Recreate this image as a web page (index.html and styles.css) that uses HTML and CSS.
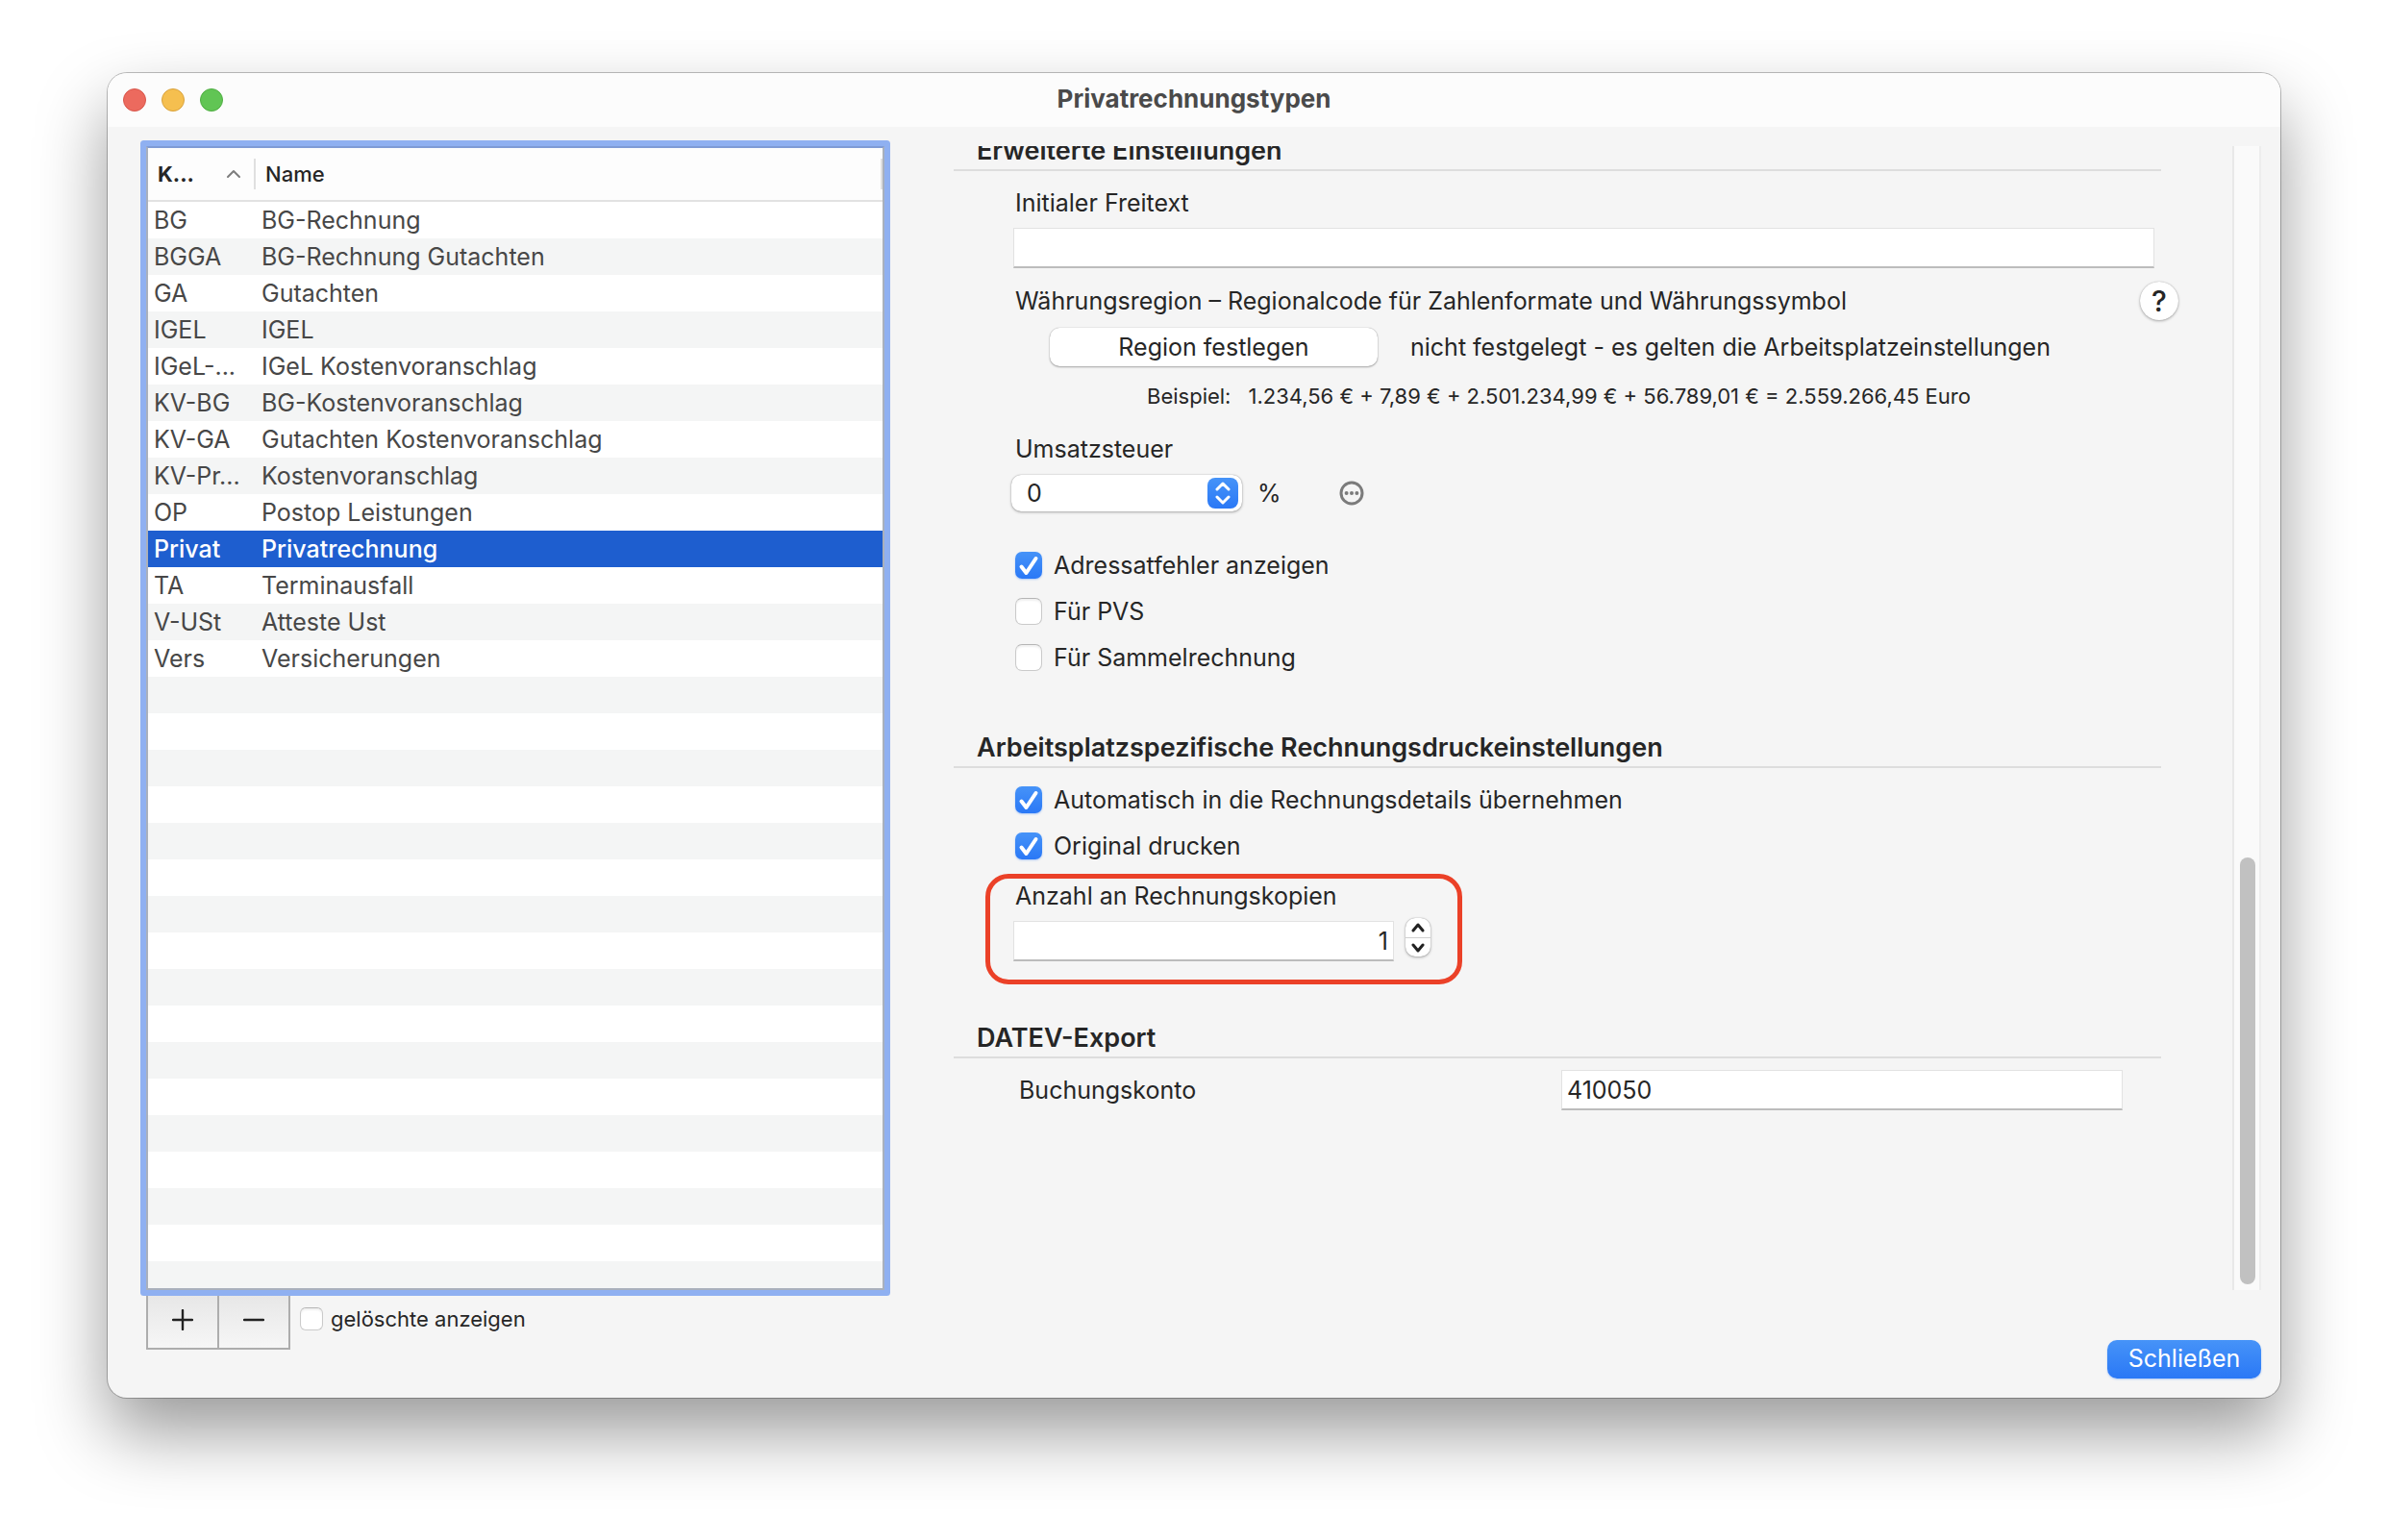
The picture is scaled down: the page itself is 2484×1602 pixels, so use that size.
FILE: index.html
```html
<!DOCTYPE html>
<html lang="de">
<head>
    <meta charset="UTF-8">
    <meta name="viewport" content="width=device-width, initial-scale=1.0">
    <title>Privatrechnungstypen</title>
    <link rel="stylesheet" href="styles.css">
</head>
<body>
    <div class="window">
        <header class="titlebar">
            <div class="lights">
                <span class="light red"></span>
                <span class="light yellow"></span>
                <span class="light green"></span>
            </div>
            <h1>Privatrechnungstypen</h1>
        </header>

        <main class="content">
            <!-- Liste der Rechnungstypen -->
            <div class="list">
                <table>
                    <thead>
                        <tr>
                            <th class="col-code sorted">
                                <div class="th-inner">
                                    <span>K...</span>
                                    <svg width="16" height="10" viewBox="0 0 16 10"><path d="M2 8l6-6 6 6" fill="none" stroke="#7d7d7d" stroke-width="2" stroke-linecap="round" stroke-linejoin="round"/></svg>
                                </div>
                            </th>
                            <th><div class="th-inner last">Name</div></th>
                        </tr>
                    </thead>
                    <tbody>
                        <tr><td>BG</td><td>BG-Rechnung</td></tr>
                        <tr><td>BGGA</td><td>BG-Rechnung Gutachten</td></tr>
                        <tr><td>GA</td><td>Gutachten</td></tr>
                        <tr><td>IGEL</td><td>IGEL</td></tr>
                        <tr><td>IGeL-...</td><td>IGeL Kostenvoranschlag</td></tr>
                        <tr><td>KV-BG</td><td>BG-Kostenvoranschlag</td></tr>
                        <tr><td>KV-GA</td><td>Gutachten Kostenvoranschlag</td></tr>
                        <tr><td>KV-Pr...</td><td>Kostenvoranschlag</td></tr>
                        <tr><td>OP</td><td>Postop Leistungen</td></tr>
                        <tr class="selected"><td>Privat</td><td>Privatrechnung</td></tr>
                        <tr><td>TA</td><td>Terminausfall</td></tr>
                        <tr><td>V-USt</td><td>Atteste Ust</td></tr>
                        <tr><td>Vers</td><td>Versicherungen</td></tr>
                    </tbody>
                </table>
                <div class="empty-rows"></div>
            </div>

            <!-- Einstellungen -->
            <div class="panel">
                <form class="form">
                    <section>
                        <h2>Erweiterte Einstellungen</h2>
                        <div class="section-body">
                            <label class="label" for="freitext">Initialer Freitext</label>
                            <input class="field" type="text" id="freitext">

                            <div class="region-head">
                                <span class="label">Währungsregion – Regionalcode für Zahlenformate und Währungssymbol</span>
                                <button type="button" class="help" aria-label="Hilfe">?</button>
                            </div>
                            <div class="region">
                                <button type="button" class="push">Region festlegen</button>
                                <span>nicht festgelegt - es gelten die Arbeitsplatzeinstellungen</span>
                            </div>
                            <p class="example"><span>Beispiel:</span><span>1.234,56 € + 7,89 € + 2.501.234,99 € + 56.789,01 € = 2.559.266,45 Euro</span></p>

                            <label class="label tax-label" for="steuer">Umsatzsteuer</label>
                            <div class="tax">
                                <div class="popup">
                                    <select id="steuer">
                                        <option>0</option>
                                        <option>7</option>
                                        <option>19</option>
                                    </select>
                                    <svg class="popup-arrows" width="32" height="32" viewBox="0 0 32 32">
                                        <path d="M10 12l6-6 6 6M10 20l6 6 6-6" fill="none" stroke="#fff" stroke-width="3" stroke-linecap="round" stroke-linejoin="round"/>
                                    </svg>
                                </div>
                                <span>%</span>
                                <button type="button" class="more" aria-label="Mehr">
                                    <svg width="26" height="26" viewBox="0 0 26 26">
                                        <circle cx="13" cy="13" r="11" fill="none" stroke="#7b7b7b" stroke-width="3"/>
                                        <circle cx="7.6" cy="13" r="2" fill="#7b7b7b"/>
                                        <circle cx="13" cy="13" r="2" fill="#7b7b7b"/>
                                        <circle cx="18.4" cy="13" r="2" fill="#7b7b7b"/>
                                    </svg>
                                </button>
                            </div>

                            <div class="checks checks-main">
                                <label class="check">
                                    <input type="checkbox" checked>
                                    <svg class="tick" width="28" height="28" viewBox="0 0 28 28"><path d="M6.500 15.500l5 6.500L21.500 7" fill="none" stroke="#fff" stroke-width="4" stroke-linecap="round" stroke-linejoin="round"/></svg>
                                    <span>Adressatfehler anzeigen</span>
                                </label>
                                <label class="check">
                                    <input type="checkbox">
                                    <span>Für PVS</span>
                                </label>
                                <label class="check">
                                    <input type="checkbox">
                                    <span>Für Sammelrechnung</span>
                                </label>
                            </div>
                        </div>
                    </section>

                    <section>
                        <h2>Arbeitsplatzspezifische Rechnungsdruckeinstellungen</h2>
                        <div class="section-body">
                            <div class="checks">
                                <label class="check">
                                    <input type="checkbox" checked>
                                    <svg class="tick" width="28" height="28" viewBox="0 0 28 28"><path d="M6.500 15.500l5 6.500L21.500 7" fill="none" stroke="#fff" stroke-width="4" stroke-linecap="round" stroke-linejoin="round"/></svg>
                                    <span>Automatisch in die Rechnungsdetails übernehmen</span>
                                </label>
                                <label class="check">
                                    <input type="checkbox" checked>
                                    <svg class="tick" width="28" height="28" viewBox="0 0 28 28"><path d="M6.500 15.500l5 6.500L21.500 7" fill="none" stroke="#fff" stroke-width="4" stroke-linecap="round" stroke-linejoin="round"/></svg>
                                    <span>Original drucken</span>
                                </label>
                            </div>
                            <div class="highlight">
                                <label class="label" for="kopien">Anzahl an Rechnungskopien</label>
                                <div class="copies">
                                    <input class="field" type="number" id="kopien" value="1">
                                    <div class="stepper">
                                        <button type="button" aria-label="Mehr Kopien"><svg width="16" height="10" viewBox="0 0 16 10"><path d="M3 8l5-6 5 6" fill="none" stroke="#222" stroke-width="3" stroke-linecap="round" stroke-linejoin="round"/></svg></button>
                                        <button type="button" aria-label="Weniger Kopien"><svg width="16" height="10" viewBox="0 0 16 10"><path d="M3 2l5 6 5-6" fill="none" stroke="#222" stroke-width="3" stroke-linecap="round" stroke-linejoin="round"/></svg></button>
                                    </div>
                                </div>
                            </div>
                        </div>
                    </section>

                    <section class="datev">
                        <h2>DATEV-Export</h2>
                        <div class="section-body account">
                            <label for="konto">Buchungskonto</label>
                            <input class="field" type="text" id="konto" value="410050">
                        </div>
                    </section>
                </form>
                <div class="scrollbar"><div class="thumb"></div></div>
            </div>
        </main>

        <footer class="footer">
            <div class="list-actions">
                <button type="button" class="square" aria-label="Hinzufügen"><svg width="22" height="22" viewBox="0 0 22 22"><path d="M11 1v20M1 11h20" stroke="#222" stroke-width="2.400" stroke-linecap="round"/></svg></button>
                <button type="button" class="square" aria-label="Entfernen"><svg width="22" height="22" viewBox="0 0 22 22"><path d="M1 11h20" stroke="#222" stroke-width="2.400" stroke-linecap="round"/></svg></button>
                <label class="check small">
                    <input type="checkbox">
                    <span>gelöschte anzeigen</span>
                </label>
            </div>
            <button type="button" class="close">Schließen</button>
        </footer>
    </div>
</body>
</html>
```
FILE: styles.css
```css
* {
    box-sizing: border-box;
}
body {
    margin: 0;
    padding: 76px 112px 148px;
    min-height: 100vh;
    display: flex;
    background: #fff;
    font-family: Inter, "Liberation Sans", sans-serif;
    font-size: 25px;
    line-height: 32px;
    color: #262626;
}
button, input, select {
    font: inherit;
    color: inherit;
    margin: 0;
}
svg {
    display: block;
}
.window {
    flex: 1;
    display: flex;
    flex-direction: column;
    background: #f5f5f5;
    border-radius: 20px;
    box-shadow: 0 0 0 1px rgba(0,0,0,0.25), 0 36px 72px rgba(0,0,0,0.4);
}
.titlebar {
    position: relative;
    height: 56px;
    display: flex;
    align-items: center;
    justify-content: center;
    padding-bottom: 2px;
    background: #fcfcfc;
    border-radius: 20px 20px 0 0;
}
.titlebar h1 {
    margin: 0;
    font-size: 26px;
    font-weight: 700;
    color: #4a4a4a;
}
.lights {
    position: absolute;
    left: 16px;
    top: 16px;
    display: flex;
    gap: 16px;
}
.light {
    width: 24px;
    height: 24px;
    border-radius: 50%;
}
.red {
    background: #ec6a5e;
    border: 1px solid #d8564b;
}
.yellow {
    background: #f5bf4f;
    border: 1px solid #d9a23c;
}
.green {
    background: #61c554;
    border: 1px solid #4fae42;
}
.content {
    flex: 1;
    display: grid;
    grid-template-columns: 768fr 1360fr;
    gap: 72px;
    padding: 20px 20px 0 40px;
}

/* Liste */
.list {
    position: relative;
    display: flex;
    flex-direction: column;
    background: #fff;
    border: 2px solid #a9b0bc;
    border-top-color: #7f9bd6;
    box-shadow: 0 0 0 6px #8fb0f1;
    border-radius: 1px;
}
table {
    width: 100%;
    border-collapse: separate;
    border-spacing: 0;
    table-layout: fixed;
    color: #474747;
}
th {
    padding: 0;
    height: 56px;
    border-bottom: 2px solid #e2e2e2;
    font-size: 22px;
    font-weight: 500;
    text-align: left;
    color: #262626;
    background: #fdfdfd;
}
.col-code {
    width: 112px;
    font-weight: 700;
}
.th-inner {
    display: flex;
    align-items: center;
    justify-content: space-between;
    padding: 0 13px 0 10px;
    border-right: 2px solid #e0e0e0;
}
td {
    height: 38px;
    padding: 0 0 0 6px;
    white-space: nowrap;
}
tbody tr:nth-child(even) {
    background: #f4f5f5;
}
tbody tr.selected {
    background: #1e5ecf;
    color: #fff;
    font-weight: 500;
}
.empty-rows {
    flex: 1;
    background: repeating-linear-gradient(#f4f5f5 0 38px, #fff 38px 76px);
}

/* Einstellungen */
.panel {
    display: flex;
    overflow: hidden;
}
.form {
    flex: 1;
    padding-right: 74px;
}
h2 {
    margin: 62px 0 0;
    padding: 0 0 3px 24px;
    border-bottom: 2px solid #dddddd;
    font-size: 27px;
    line-height: 32px;
    font-weight: 600;
}
section:first-child h2 {
    margin-top: -11px;
}
.datev h2 {
    margin-top: 40px;
}
.section-body {
    padding: 17px 7px 0 62px;
}
.label {
    display: block;
    padding-left: 2px;
}
.field {
    display: block;
    width: 100%;
    height: 42px;
    margin-top: 10px;
    padding: 0 5px;
    background: #fff;
    border: 1px solid #e2e2e2;
    border-bottom: 2px solid #bcbcbc;
    border-radius: 0;
    outline: none;
}
.region-head {
    display: flex;
    justify-content: space-between;
    align-items: center;
    height: 32px;
    margin: 18px -25px 0 0;
}
.help {
    width: 40px;
    height: 40px;
    padding: 0;
    border: none;
    border-radius: 50%;
    background: #fff;
    box-shadow: 0 0 1px rgba(0,0,0,0.3), 0 1px 3px rgba(0,0,0,0.3);
    font-size: 30px;
    font-weight: 500;
}
.region {
    display: flex;
    align-items: center;
    gap: 34px;
    margin: 12px 0 0 38px;
}
.push {
    width: 341px;
    height: 40px;
    padding: 0;
    border: none;
    border-radius: 10px;
    background: #fff;
    box-shadow: 0 0 1px rgba(0,0,0,0.4), 0 1px 2px rgba(0,0,0,0.3);
}
.example {
    display: flex;
    gap: 18px;
    margin: 17px 0 0 139px;
    font-size: 22px;
    line-height: 28px;
}
.tax-label {
    margin-top: 25px;
}
.tax {
    display: flex;
    align-items: center;
    height: 38px;
    margin-top: 11px;
}
.popup {
    position: relative;
    width: 240px;
    margin: 0 16px 0 -2px;
}
.popup select {
    appearance: none;
    display: block;
    width: 100%;
    height: 38px;
    padding: 0 40px 0 16px;
    border: none;
    border-radius: 10px;
    background: #fff;
    box-shadow: 0 0 1px rgba(0,0,0,0.4), 0 1px 3px rgba(0,0,0,0.3);
}
.popup-arrows {
    position: absolute;
    right: 4px;
    top: 3px;
    border-radius: 8px;
    background: linear-gradient(#4693f8, #2a78f6);
    pointer-events: none;
}
.more {
    margin-left: 60px;
    padding: 0;
    border: none;
    background: none;
}
.checks {
    display: flex;
    flex-direction: column;
    align-items: flex-start;
    gap: 16px;
}
.checks-main {
    margin-top: 40px;
}
.check {
    position: relative;
    display: flex;
    align-items: center;
    gap: 12px;
    padding-left: 2px;
}
.check input {
    appearance: none;
    width: 28px;
    height: 28px;
    border: 1px solid #cacaca;
    border-top-color: #b5b5b5;
    border-radius: 7px;
    background: #fff;
    box-shadow: inset 0 2px 2px rgba(0,0,0,0.06);
}
.check input:checked {
    border: none;
    background: linear-gradient(#4693f8, #2a78f6);
    box-shadow: 0 1px 2px rgba(42,120,246,0.35);
}
.tick {
    position: absolute;
    left: 2px;
    top: 2px;
}
.check input:not(:checked) + .tick {
    display: none;
}
.highlight {
    width: 496px;
    margin: 13px 0 0 -29px;
    padding: 2px 24px 19px;
    border: 5px solid #eb4128;
    border-radius: 24px;
}
.copies {
    display: flex;
    align-items: center;
    gap: 12px;
    height: 42px;
    margin-top: 10px;
}
.copies .field {
    width: 396px;
    margin: 0;
    text-align: right;
    appearance: textfield;
}
.copies .field::-webkit-inner-spin-button {
    appearance: none;
    margin: 0;
}
.stepper {
    width: 26px;
    height: 40px;
    margin-bottom: 8px;
    border-radius: 10px;
    background: #fff;
    box-shadow: 0 0 1px rgba(0,0,0,0.4), 0 1px 3px rgba(0,0,0,0.3);
}
.stepper button {
    display: flex;
    align-items: center;
    justify-content: center;
    width: 100%;
    height: 20px;
    padding: 0;
    border: none;
    background: none;
}
.stepper button + button {
    border-top: 1px solid #cfcfcf;
}
.account {
    display: grid;
    grid-template-columns: 564fr 584fr;
    align-items: center;
    padding: 12px 40px 0 68px;
}
.account .field {
    margin: 0;
}
.scrollbar {
    width: 30px;
    display: flex;
    flex-direction: column;
    justify-content: flex-end;
    padding: 0 4px 6px 6px;
    background: #fafafa;
    border-left: 2px solid #e8e8e8;
    border-right: 2px solid #ededed;
}
.thumb {
    height: 37.5%;
    border-radius: 8px;
    background: #c1c1c1;
}

/* Fußzeile */
.footer {
    display: flex;
    justify-content: space-between;
    align-items: flex-end;
    min-height: 112px;
    padding: 0 20px 20px 40px;
}
.list-actions {
    display: flex;
    align-self: flex-start;
}
.square {
    display: flex;
    align-items: center;
    justify-content: center;
    width: 76px;
    height: 62px;
    padding: 0;
    border: 2px solid #adadad;
    background: linear-gradient(#e6e6e6, #f6f6f6);
}
.square + .square {
    width: 74px;
    border-left: none;
}
.small {
    height: 32px;
    margin: 14px 0 0 8px;
    gap: 8px;
    font-size: 22px;
}
.small input {
    width: 24px;
    height: 24px;
    border-radius: 6px;
}
.close {
    width: 160px;
    height: 40px;
    padding: 0 0 2px;
    border: none;
    border-radius: 10px;
    background: linear-gradient(#4693f8, #2a78f6);
    box-shadow: 0 1px 2px rgba(42,120,246,0.35);
    color: #fff;
}
```
